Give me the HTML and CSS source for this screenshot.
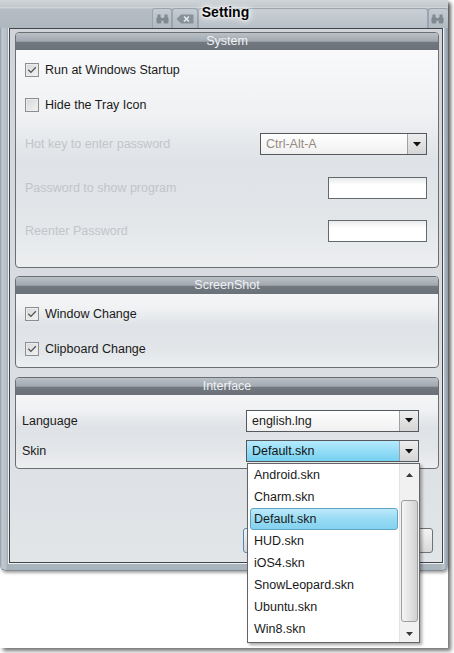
FILE: index.html
```html
<!DOCTYPE html>
<html>
<head>
<meta charset="utf-8">
<title>Setting</title>
<link rel="stylesheet" href="styles.css">
</head>
<body>
<div class="shot">
  <div class="window">
    <div class="titlebar">
      <div class="tabstrip">
        <div class="tab tab-a">
          <svg width="13" height="10" viewBox="0 0 13 10"><g fill="#7f8992"><rect x="0.5" y="3" width="5" height="6.5" rx="1.5"/><rect x="7.5" y="3" width="5" height="6.5" rx="1.5"/><rect x="1.5" y="0.5" width="3" height="3.5"/><rect x="8.5" y="0.5" width="3" height="3.5"/><rect x="5" y="4" width="3" height="2.5"/></g></svg>
        </div>
        <div class="tab tab-b">
          <svg width="18" height="10" viewBox="0 0 18 10"><path d="M5 0.5H16.5a1 1 0 0 1 1 1V8.5a1 1 0 0 1-1 1H5L0.5 5Z" fill="#87919a"/><path d="M8 2.5l5 5M13 2.5l-5 5" stroke="#e6eaee" stroke-width="1.6"/></svg>
        </div>
        <div class="tab tab-c"></div>
        <div class="tab tab-d">
          <svg width="13" height="10" viewBox="0 0 13 10"><g fill="#7f8992"><rect x="0.5" y="3" width="5" height="6.5" rx="1.5"/><rect x="7.5" y="3" width="5" height="6.5" rx="1.5"/><rect x="1.5" y="0.5" width="3" height="3.5"/><rect x="8.5" y="0.5" width="3" height="3.5"/><rect x="5" y="4" width="3" height="2.5"/></g></svg>
        </div>
      </div>
      <div class="title">Setting</div>
    </div>

    <div class="client">
      <section class="group g-system">
        <div class="group-head">System</div>
        <div class="group-body sys-body">
          <div class="row h35">
            <span class="check"><svg width="10" height="8" viewBox="0 0 10 8"><path d="M1.3 3.8L3.9 6.4L8.8 1.3" fill="none" stroke="#505357" stroke-width="1.3"/></svg></span>
            <span class="lbl">Run at Windows Startup</span>
          </div>
          <div class="row h35">
            <span class="check"></span>
            <span class="lbl">Hide the Tray Icon</span>
          </div>
          <div class="row h44">
            <span class="lbl dis">Hot key to enter password</span>
            <div class="combo sys-combo">
              <span class="combo-text hotkey">Ctrl-Alt-A</span>
              <span class="combo-btn"><svg width="8" height="5" viewBox="0 0 8 5"><path d="M0 0H8L4 4.5Z" fill="#111"/></svg></span>
            </div>
          </div>
          <div class="row h43">
            <span class="lbl dis">Password to show program</span>
            <span class="edit"></span>
          </div>
          <div class="row h43">
            <span class="lbl dis">Reenter Password</span>
            <span class="edit"></span>
          </div>
        </div>
      </section>

      <section class="group g-shot">
        <div class="group-head">ScreenShot</div>
        <div class="group-body shot-body">
          <div class="row h35">
            <span class="check"><svg width="10" height="8" viewBox="0 0 10 8"><path d="M1.3 3.8L3.9 6.4L8.8 1.3" fill="none" stroke="#505357" stroke-width="1.3"/></svg></span>
            <span class="lbl">Window Change</span>
          </div>
          <div class="row h35">
            <span class="check"><svg width="10" height="8" viewBox="0 0 10 8"><path d="M1.3 3.8L3.9 6.4L8.8 1.3" fill="none" stroke="#505357" stroke-width="1.3"/></svg></span>
            <span class="lbl">Clipboard Change</span>
          </div>
        </div>
      </section>

      <section class="group g-iface">
        <div class="group-head">Interface</div>
        <div class="group-body iface-body">
          <div class="row h31">
            <span class="lbl">Language</span>
            <div class="combo if-combo">
              <span class="combo-text">english.lng</span>
              <span class="combo-btn"><svg width="8" height="5" viewBox="0 0 8 5"><path d="M0 0H8L4 4.5Z" fill="#111"/></svg></span>
            </div>
          </div>
          <div class="row h30">
            <span class="lbl">Skin</span>
            <div class="combo if-combo">
              <span class="combo-text active">Default.skn</span>
              <span class="combo-btn"><svg width="8" height="5" viewBox="0 0 8 5"><path d="M0 0H8L4 4.5Z" fill="#111"/></svg></span>
            </div>
          </div>
        </div>
      </section>

      <div class="buttons">
        <span class="btn btn-default"></span>
        <span class="btn"></span>
      </div>
    </div>
  </div>

  <div class="dropdown">
    <div class="items">
      <div class="item">Android.skn</div>
      <div class="item">Charm.skn</div>
      <div class="item sel">Default.skn</div>
      <div class="item">HUD.skn</div>
      <div class="item">iOS4.skn</div>
      <div class="item">SnowLeopard.skn</div>
      <div class="item">Ubuntu.skn</div>
      <div class="item">Win8.skn</div>
    </div>
    <div class="scrollbar">
      <div class="sb-btn sb-up"><svg width="7" height="4" viewBox="0 0 7 4"><path d="M0 4H7L3.5 0Z" fill="#3a3a3a"/></svg></div>
      <div class="sb-track"><div class="sb-thumb"></div></div>
      <div class="sb-btn sb-down"><svg width="7" height="4" viewBox="0 0 7 4"><path d="M0 0H7L3.5 4Z" fill="#3a3a3a"/></svg></div>
    </div>
  </div>
</div>
</body>
</html>
```

FILE: styles.css
```css
* { box-sizing: border-box; }

html, body {
  margin: 0;
  padding: 0;
  background: #ffffff;
}

body {
  width: 454px;
  height: 653px;
  overflow: hidden;
  font-family: "Liberation Sans", Arial, sans-serif;
  font-size: 12.5px;
  color: #1a1a1a;
}

.shot {
  position: relative;
  width: 448px;
  height: 648px;
  background: #ffffff;
  box-shadow: 3px 3px 4px rgba(0, 0, 0, 0.55);
}

.window {
  width: 448px;
  height: 571px;
  display: flex;
  flex-direction: column;
  border-radius: 0 0 6px 6px;
  border-bottom: 1px solid #7f8a95;
  background: linear-gradient(90deg, #8e99a4 0, #c1c8cf 2px, #b9c1c9 6px, #9ea8b2 8px, #aab4bd 9px, #aab4bd 440px, #bcc4cb 444px, #93a0ac 447px);
  box-shadow: 1px 2px 3px rgba(0, 0, 0, 0.35);
}

/* ---------- title bar ---------- */
.titlebar {
  position: relative;
  height: 28px;
  flex: none;
  background: linear-gradient(#cfd4d8 0, #c4c9ce 7px, #d8dce0 7px, #b6bdc4 9px, #aeb6be 28px);
}

.tabstrip {
  display: flex;
  height: 20px;
  margin-top: 8px;
  padding-left: 152px;
}

.tab {
  height: 20px;
  display: flex;
  align-items: center;
  justify-content: center;
  border: 1px solid #9aa4ae;
  border-bottom: none;
  border-radius: 3px 3px 0 0;
  background: linear-gradient(#c4cbd2, #b1b9c1);
}

.tab-a { width: 20px; }
.tab-b { width: 26px; }
.tab-c { width: 230px; background: linear-gradient(#c9cfd5, #b8c0c7); }
.tab-d { flex: 1; justify-content: flex-start; padding-left: 2px; border-right: none; }

.title {
  position: absolute;
  left: 0;
  right: 0;
  top: 4px;
  padding-left: 3px;
  text-align: center;
  font-weight: bold;
  font-size: 14px;
  color: #050505;
  text-shadow: 0 0 3px #ffffff, 0 0 6px #ffffff, 0 0 9px #ffffff;
}

/* ---------- client ---------- */
.client {
  margin: 0 5px 0 9px;
  height: 535px;
  flex: none;
  border: 1px solid #40464c;
  box-shadow: 0 0 0 1px rgba(255, 255, 255, 0.8);
  background: linear-gradient(#d1d5d9, #dadde1 60%, #e2e5e8);
  padding: 3px 3px 0 5px;
  display: flex;
  flex-direction: column;
}

.group {
  border: 1px solid #6b6e72;
  border-radius: 4px;
  overflow: hidden;
  background: linear-gradient(#fbfbfc 0%, #eff1f3 35%, #dfe2e6 55%, #e3e6e9 80%, #eceef0 100%);
  flex: none;
}

.g-system { height: 236px; }
.g-shot { height: 92px; margin-top: 8px; }
.g-iface { height: 92px; margin-top: 9px; }

.group-head {
  height: 17px;
  line-height: 17px;
  text-align: center;
  color: #eef1f4;
  background: linear-gradient(#b9c0c6 0, #a3aab1 45%, #959ca3 50%, #71787f 52%, #6a7178 100%);
}

.group-body {
  display: flex;
  flex-direction: column;
}

.sys-body { padding: 2px 11px 0 9px; }
.shot-body { padding: 2px 11px 0 9px; }
.iface-body { padding: 10px 19px 0 6px; }

.row {
  display: flex;
  align-items: center;
  flex: none;
}

.h30 { height: 30px; }
.h31 { height: 31px; }
.h35 { height: 35px; }
.h43 { height: 43px; }
.h44 { height: 44px; }

.lbl { white-space: nowrap; }
.lbl.dis { color: #c1c5c9; }

.check {
  width: 14px;
  height: 14px;
  flex: none;
  margin-right: 6px;
  border: 1px solid #8d8e8f;
  background: linear-gradient(135deg, #d6d7d8, #f3f3f3);
  box-shadow: inset 0 0 0 1px #ececec;
  display: flex;
  align-items: center;
  justify-content: center;
}

/* ---------- combos / edits ---------- */
.combo {
  display: flex;
  height: 22px;
  margin-left: auto;
  border: 1px solid #55595d;
  background: linear-gradient(#ffffff, #f0f0f0);
}

.sys-combo { width: 167px; }
.if-combo { width: 173px; }

.combo-text {
  flex: 1;
  padding-left: 5px;
  line-height: 20px;
  white-space: nowrap;
}

.combo-text.hotkey { color: #958a80; }

.combo-text.active {
  background: linear-gradient(#b6eafc, #94ddf7 50%, #76cfef);
  color: #111;
}

.combo-btn {
  width: 19px;
  flex: none;
  border-left: 1px solid #9ea2a6;
  background: linear-gradient(#eeeeee, #d5d5d5);
  display: flex;
  align-items: center;
  justify-content: center;
}

.edit {
  margin-left: auto;
  width: 99px;
  height: 22px;
  border: 1px solid #66696c;
  background: linear-gradient(#e9eaeb, #ffffff 35%);
}

/* ---------- buttons ---------- */
.buttons {
  display: flex;
  justify-content: flex-end;
  gap: 16px;
  margin-top: 59px;
  padding-right: 6px;
}

.btn {
  width: 87px;
  height: 25px;
  border: 1px solid #707274;
  border-radius: 3px;
  background: linear-gradient(#f4f4f4, #e6e6e6 50%, #d8d8d8);
}

.btn-default { border-color: #4f88b5; }

/* ---------- dropdown list ---------- */
.dropdown {
  position: absolute;
  left: 247px;
  top: 463px;
  width: 173px;
  height: 180px;
  border: 1px solid #626466;
  background: #ffffff;
  box-shadow: 2px 2px 3px rgba(0, 0, 0, 0.35);
  display: flex;
}

.items {
  width: 148px;
  margin-left: 2px;
  margin-right: 1px;
}

.item {
  height: 22px;
  line-height: 22px;
  padding-left: 4px;
  white-space: nowrap;
  color: #1a1a1a;
}

.item.sel {
  border: 1px solid #5fa5c6;
  border-radius: 3px;
  line-height: 20px;
  padding-left: 3px;
  background: linear-gradient(#bdeafb, #98dbf4 50%, #84d2f0);
}

.scrollbar {
  width: 20px;
  display: flex;
  flex-direction: column;
  background: #f1f1f1;
  border-left: 1px solid #e4e4e4;
}

.sb-btn {
  display: flex;
  align-items: center;
  justify-content: center;
  flex: none;
}

.sb-up { height: 22px; }
.sb-down { height: 17px; }

.sb-track {
  flex: 1;
  padding: 14px 1px 0 1px;
}

.sb-thumb {
  height: 122px;
  border: 1px solid #9c9ea0;
  border-radius: 3px;
  background: linear-gradient(90deg, #f5f5f5, #e4e4e4 50%, #d0d0d0);
}
```
